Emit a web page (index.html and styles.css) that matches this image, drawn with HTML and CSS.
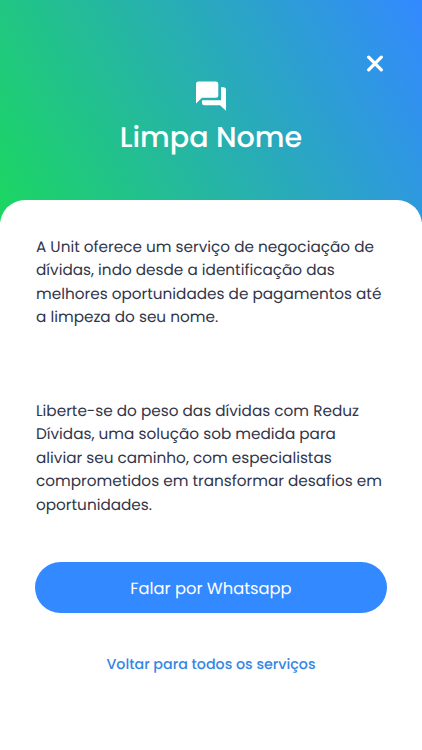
FILE: index.html
```html
<!DOCTYPE html>
<html lang="pt-BR">
<head>
    <meta charset="UTF-8">
    <meta name="viewport" content="width=device-width, initial-scale=1.0">
    <title>Limpa Nome</title>
    <link rel="stylesheet" href="styles.css">
</head>
<body>
<div class="screen">
    <header class="hero">
        <button class="close-btn" aria-label="Fechar">
            <svg class="close-icon" viewBox="0 0 18 18">
                <path d="M2.7 3.2l12.6 12.6M15.3 3.2L2.7 15.8"/>
            </svg>
        </button>
        <svg class="chat-icon" viewBox="0 0 30 30">
            <path d="M2.5 .5h17.3a2.5 2.5 0 0 1 2.5 2.5v11.2a2.5 2.5 0 0 1-2.5 2.5H6L0 22.5V3A2.5 2.5 0 0 1 2.5 .5z"/>
            <path d="M25 6.3h2.5A2.5 2.5 0 0 1 30 8.8V29.8L24 24.2H8.5A2.5 2.5 0 0 1 6 21.7V19.3H25z"/>
        </svg>
        <h1 class="title">Limpa Nome</h1>
    </header>

    <main class="sheet">
        <p class="text">
            A Unit oferece um serviço de negociação de<br>
            dívidas, indo desde a identificação das<br>
            melhores oportunidades de pagamentos até<br>
            a limpeza do seu nome.
        </p>
        <p class="text">
            Liberte-se do peso das dívidas com Reduz<br>
            Dívidas, uma solução sob medida para<br>
            aliviar seu caminho, com especialistas<br>
            comprometidos em transformar desafios em<br>
            oportunidades.
        </p>
        <button class="whatsapp-btn">Falar por Whatsapp</button>
        <a class="back-link" href="#">Voltar para todos os serviços</a>
    </main>
</div>
</body>
</html>
```
FILE: styles.css
```css
:root {
    --green: #1bd760;
    --blue: #3389ff;
    --text: #32364a;
    --link: #3586e4;
}

* {
    margin: 0;
    padding: 0;
    box-sizing: border-box;
}

body {
    font-family: Poppins, Inter, "Open Sans", sans-serif;
    text-rendering: geometricPrecision;
    color: var(--text);
}

.screen {
    display: flex;
    flex-direction: column;
    height: 750px;
    overflow: hidden;
    background: linear-gradient(62deg, var(--green), var(--blue)) top / 100% 222px no-repeat;
}

.hero {
    display: flex;
    flex-direction: column;
    align-items: center;
    height: 200px;
    padding-top: 53px;
}

.close-btn {
    align-self: flex-end;
    display: flex;
    margin-right: 37px;
    padding: 1px;
    background: none;
    border: none;
    cursor: pointer;
}

.close-icon {
    width: 18px;
    height: 18px;
    fill: none;
    stroke: #ffffff;
    stroke-width: 3.3;
    stroke-linecap: round;
}

.chat-icon {
    width: 30px;
    height: 30px;
    margin-top: 8px;
    fill: #ffffff;
}

.title {
    margin-top: 8px;
    color: #ffffff;
    font-size: 28.6px;
    font-weight: 500;
    line-height: 38px;
    white-space: nowrap;
}

.sheet {
    display: flex;
    flex: 1;
    flex-direction: column;
    padding: 36px 35px 0 36px;
    background: #ffffff;
    border-radius: 25px 25px 0 0;
}

.text {
    margin-bottom: 70px;
    font-size: 15.27px;
    line-height: 23.45px;
    white-space: nowrap;
}

.text + .text {
    margin-bottom: 45px;
}

.whatsapp-btn {
    height: 51px;
    margin-left: -1px;
    padding-top: 2px;
    background: var(--blue);
    border: none;
    border-radius: 26px;
    color: #ffffff;
    font: inherit;
    font-size: 16.3px;
    text-rendering: inherit;
    cursor: pointer;
}

.back-link {
    align-self: center;
    margin-top: 39px;
    margin-right: 1px;
    color: var(--link);
    font-size: 14.25px;
    font-weight: 500;
    line-height: 24px;
    text-decoration: none;
}
```
